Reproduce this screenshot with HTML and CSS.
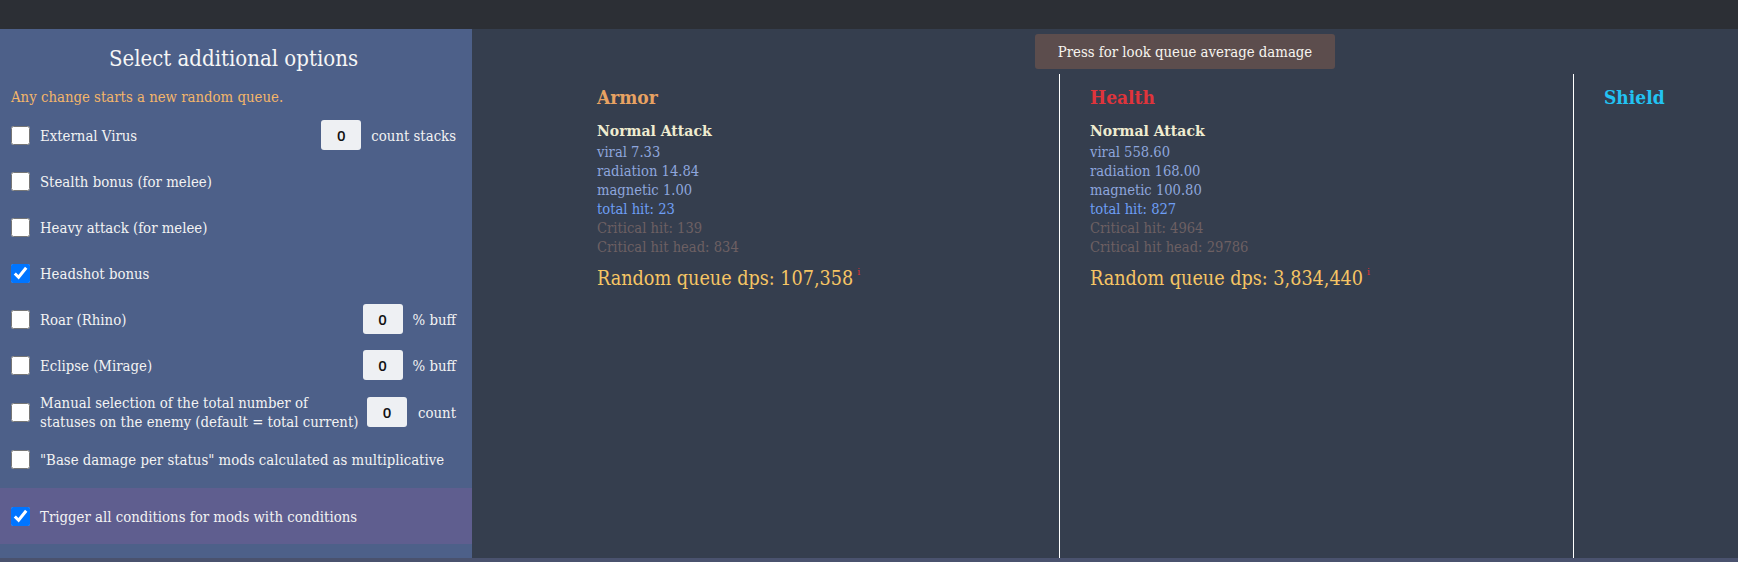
FILE: index.html
```html
<!DOCTYPE html>
<html lang="en">
<head>
<meta charset="utf-8">
<title>Options</title>
<link rel="stylesheet" href="styles.css">
</head>
<body>
<div class="topbar"></div>
<div class="app">
  <aside class="options">
    <h2 class="options-title">Select additional options</h2>
    <p class="note">Any change starts a new random queue.</p>

    <div class="opt">
      <label class="opt-label"><input type="checkbox" class="cb"><span>External Virus</span></label>
      <div class="opt-extra"><input class="num" type="text" value="0"><span class="unit">count stacks</span></div>
    </div>
    <div class="opt">
      <label class="opt-label"><input type="checkbox" class="cb"><span>Stealth bonus (for melee)</span></label>
    </div>
    <div class="opt">
      <label class="opt-label"><input type="checkbox" class="cb"><span>Heavy attack (for melee)</span></label>
    </div>
    <div class="opt">
      <label class="opt-label"><input type="checkbox" class="cb" checked><span>Headshot bonus</span></label>
    </div>
    <div class="opt">
      <label class="opt-label"><input type="checkbox" class="cb"><span>Roar (Rhino)</span></label>
      <div class="opt-extra"><input class="num" type="text" value="0"><span class="unit">% buff</span></div>
    </div>
    <div class="opt">
      <label class="opt-label"><input type="checkbox" class="cb"><span>Eclipse (Mirage)</span></label>
      <div class="opt-extra"><input class="num" type="text" value="0"><span class="unit">% buff</span></div>
    </div>
    <div class="opt opt-tall">
      <label class="opt-label"><input type="checkbox" class="cb"><span>Manual selection of the total number of<br>statuses on the enemy (default = total current)</span></label>
      <div class="opt-extra"><input class="num" type="text" value="0"><span class="unit unit-wide">count</span></div>
    </div>
    <div class="opt">
      <label class="opt-label"><input type="checkbox" class="cb"><span>"Base damage per status" mods calculated as multiplicative</span></label>
    </div>
    <div class="opt opt-highlight">
      <label class="opt-label"><input type="checkbox" class="cb" checked><span>Trigger all conditions for mods with conditions</span></label>
    </div>
  </aside>

  <main class="results">
    <div class="toolbar"><button class="avg-btn" type="button">Press for look queue average damage</button></div>
    <div class="columns">
      <section class="col col-armor">
        <h3 class="col-title armor">Armor</h3>
        <div class="attack">
          <div class="attack-name">Normal Attack</div>
          <div class="dmg">viral 7.33</div>
          <div class="dmg">radiation 14.84</div>
          <div class="dmg">magnetic 1.00</div>
          <div class="total">total hit: 23</div>
          <div class="crit">Critical hit: 139</div>
          <div class="crit">Critical hit head: 834</div>
        </div>
        <div class="dps">Random queue dps: 107,358<sup class="info">i</sup></div>
      </section>
      <section class="col col-health">
        <h3 class="col-title health">Health</h3>
        <div class="attack">
          <div class="attack-name">Normal Attack</div>
          <div class="dmg">viral 558.60</div>
          <div class="dmg">radiation 168.00</div>
          <div class="dmg">magnetic 100.80</div>
          <div class="total">total hit: 827</div>
          <div class="crit">Critical hit: 4964</div>
          <div class="crit">Critical hit head: 29786</div>
        </div>
        <div class="dps">Random queue dps: 3,834,440<sup class="info">i</sup></div>
      </section>
      <section class="col col-shield">
        <h3 class="col-title shield">Shield</h3>
      </section>
    </div>
  </main>
</div>
</body>
</html>
```
FILE: styles.css
```css
html, body {
  margin: 0;
  height: 100%;
}
body {
  background: #4a526e;
  font-family: "DejaVu Serif Condensed", "DejaVu Serif", serif;
  overflow: hidden;
}
.topbar {
  height: 29px;
  background: #2c2f35;
}
.app {
  display: flex;
  height: 529px;
}
.options {
  width: 472px;
  flex: none;
  box-sizing: border-box;
  padding: 0 16px 0 11px;
  background: #4d6089;
  color: #f3f3f3;
}
.options-title {
  margin: 0;
  padding-top: 16px;
  text-align: center;
  font-weight: normal;
  font-size: 22px;
  line-height: 28px;
  color: #f6f6f6;
}
.note {
  margin: 15px 0 6px;
  font-size: 14.8px;
  line-height: 18px;
  color: #f4b66a;
}
.opt {
  display: flex;
  align-items: center;
  justify-content: space-between;
  min-height: 36px;
  padding: 5px 0;
  font-size: 14.8px;
  line-height: 19px;
}
.opt-label {
  display: flex;
  align-items: center;
  gap: 10px;
}
.cb {
  width: 19px;
  height: 19px;
  margin: 0;
  flex: none;
}
.opt-extra {
  display: flex;
  align-items: center;
  gap: 10px;
}
.num {
  width: 40px;
  height: 30px;
  box-sizing: border-box;
  border: none;
  border-radius: 3px;
  background: #eef0f3;
  text-align: center;
  font-family: "Open Sans", sans-serif;
  font-size: 15px;
  font-weight: 600;
  color: #111;
  padding: 0;
}
.unit-wide {
  min-width: 39px;
  text-align: right;
}
.opt-highlight {
  margin: 6px -16px 0 -11px;
  padding: 18px 16px 18px 11px;
  min-height: 20px;
  background: #5f5e8f;
}
.results {
  flex: 1;
  display: flex;
  flex-direction: column;
  background: #353e4e;
  min-width: 0;
}
.toolbar {
  padding: 5px 0 5px 563px;
}
.avg-btn {
  display: block;
  width: 300px;
  height: 35px;
  border: none;
  border-radius: 3px;
  background: #5c4d4d;
  color: #f7f4ef;
  font-family: inherit;
  font-size: 14.8px;
}
.columns {
  flex: 1;
  display: flex;
}
.col {
  box-sizing: border-box;
  padding-top: 11px;
}
.col-armor {
  width: 587px;
  padding-left: 125px;
}
.col-health {
  width: 514px;
  border-left: 1px solid #fff;
  padding-left: 30px;
}
.col-shield {
  flex: 1;
  border-left: 1px solid #fff;
  padding-left: 30px;
}
.col-title {
  margin: 0;
  font-size: 19px;
  line-height: 24px;
  font-weight: bold;
}
.armor { color: #e8a262; }
.health { color: #e0343b; }
.shield { color: #22c3f3; }
.attack {
  margin-top: 12px;
  font-size: 14.6px;
  line-height: 19px;
}
.attack-name {
  font-weight: bold;
  font-size: 15.6px;
  color: #efecd0;
  margin-bottom: 2px;
}
.dmg { color: #8ea6dd; }
.total { color: #6e9ef5; }
.crit { color: #6d6063; }
.dps {
  margin-top: 10px;
  font-size: 19.6px;
  line-height: 26px;
  color: #f6c564;
}
.info {
  font-size: 10px;
  color: #e03030;
  margin-left: 4px;
  vertical-align: 10px;
  line-height: 0;
}
```
